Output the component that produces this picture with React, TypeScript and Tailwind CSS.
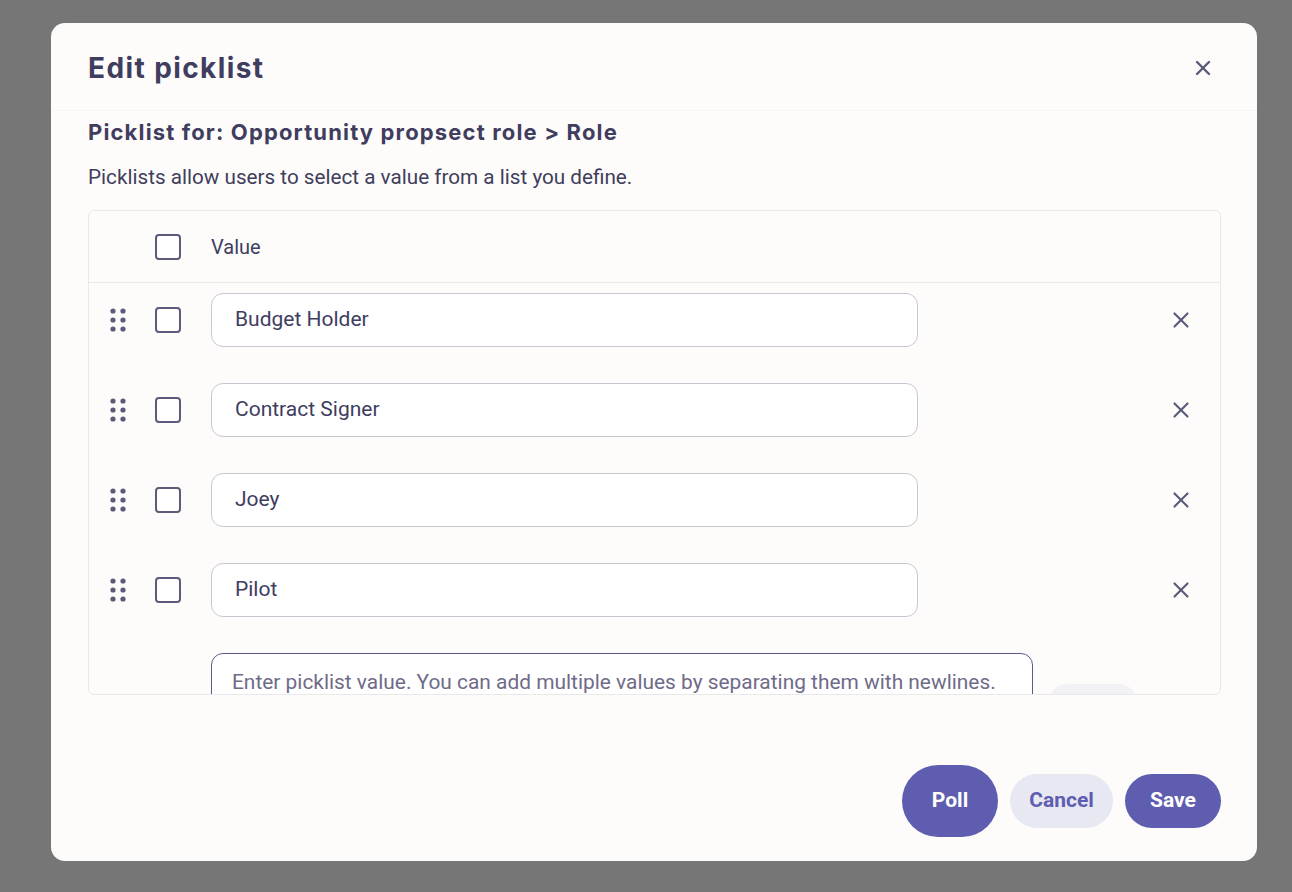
import { X } from 'lucide-react';

const values = ['Budget Holder', 'Contract Signer', 'Joey', 'Pilot'];

function DragHandle() {
  return (
    <svg width="18" height="26" viewBox="0 0 18 26" className="text-[#5c5a78]">
      {[4, 13, 22].map((cy) =>
        [4, 14].map((cx) => (
          <circle key={`${cx}-${cy}`} cx={cx} cy={cy} r="2.6" fill="currentColor" />
        ))
      )}
    </svg>
  );
}

function Checkbox() {
  return (
    <span className="block w-[26px] h-[26px] rounded-[4px] border-2 border-[#5c5a78] bg-white" />
  );
}

export default function App() {
  return (
    <div className="min-h-screen bg-[#767676] pt-[23px] pl-[51px] font-['Roboto',sans-serif] text-[#403d5f]">
      <div className="w-[1206px] h-[838px] bg-[#fdfcfb] rounded-[14px] flex flex-col">
        {/* Header */}
        <div className="flex items-center justify-between pl-[37px] pr-[42px] pt-[27px] pb-[24px] border-b border-[#f8f6f4]">
          <h2 className="font-['Inter',sans-serif] font-bold text-[28px] leading-9 tracking-[1.4px]">
            Edit picklist
          </h2>
          <X className="w-6 h-6 text-[#5c5a78]" strokeWidth={2.4} />
        </div>

        <div className="px-9 pl-[37px] pt-[7px] flex-1 flex flex-col">
          <h3 className="font-['Inter',sans-serif] font-bold text-[22px] leading-7 tracking-[1.15px]">
            Picklist for: Opportunity propsect role &gt; Role
          </h3>
          <p className="mt-[19px] text-[20.7px] leading-6 text-[#413e5c]">
            Picklists allow users to select a value from a list you define.
          </p>

          {/* Table */}
          <div className="mt-[21px] h-[485px] border border-[#ebe8ec] rounded-[6px] overflow-hidden">
            <div className="h-[72px] flex items-center border-b border-[#ebe8ec]">
              <div className="w-[66px]" />
              <Checkbox />
              <span className="ml-[30px] text-[20px]">Value</span>
            </div>

            <div className="flex flex-col gap-[36px] pt-[10px]">
              {values.map((v) => (
                <div key={v} className="h-[54px] flex items-center">
                  <div className="w-[66px] flex justify-end pr-[28px]">
                    <DragHandle />
                  </div>
                  <Checkbox />
                  <div className="ml-[30px] w-[707px] h-[54px] rounded-[12px] border border-[#c9c6cf] bg-white flex items-center px-[23px] text-[21px]">
                    {v}
                  </div>
                  <div className="flex-1 flex justify-end pr-[26px]">
                    <X className="w-[26px] h-[26px] text-[#5c5a78]" strokeWidth={2} />
                  </div>
                </div>
              ))}

              <div className="flex items-start pl-[122px]">
                <div className="w-[822px] h-[60px] rounded-t-[12px] border border-[#5d5987] bg-white px-[20px] pt-[14px] text-[20.9px] leading-[28px] whitespace-nowrap text-[#6f6b88]">
                  Enter picklist value. You can add multiple values by separating them with newlines.
                </div>
                <div className="ml-[15px] mt-[31px] w-[90px] h-[40px] rounded-full bg-[#f2f1f6]" />
              </div>
            </div>
          </div>

          {/* Footer */}
          <div className="mt-auto mb-[24px] flex items-center justify-end gap-3 font-['Roboto',sans-serif] font-bold text-[21px]">
            <button className="w-[96px] h-[72px] rounded-full bg-[#5f5db0] text-white">Poll</button>
            <button className="w-[103px] h-[54px] rounded-full bg-[#e7e8f2] text-[#5f5db0]">Cancel</button>
            <button className="w-[96px] h-[54px] rounded-full bg-[#5f5db0] text-white">Save</button>
          </div>
        </div>
      </div>
    </div>
  );
}
